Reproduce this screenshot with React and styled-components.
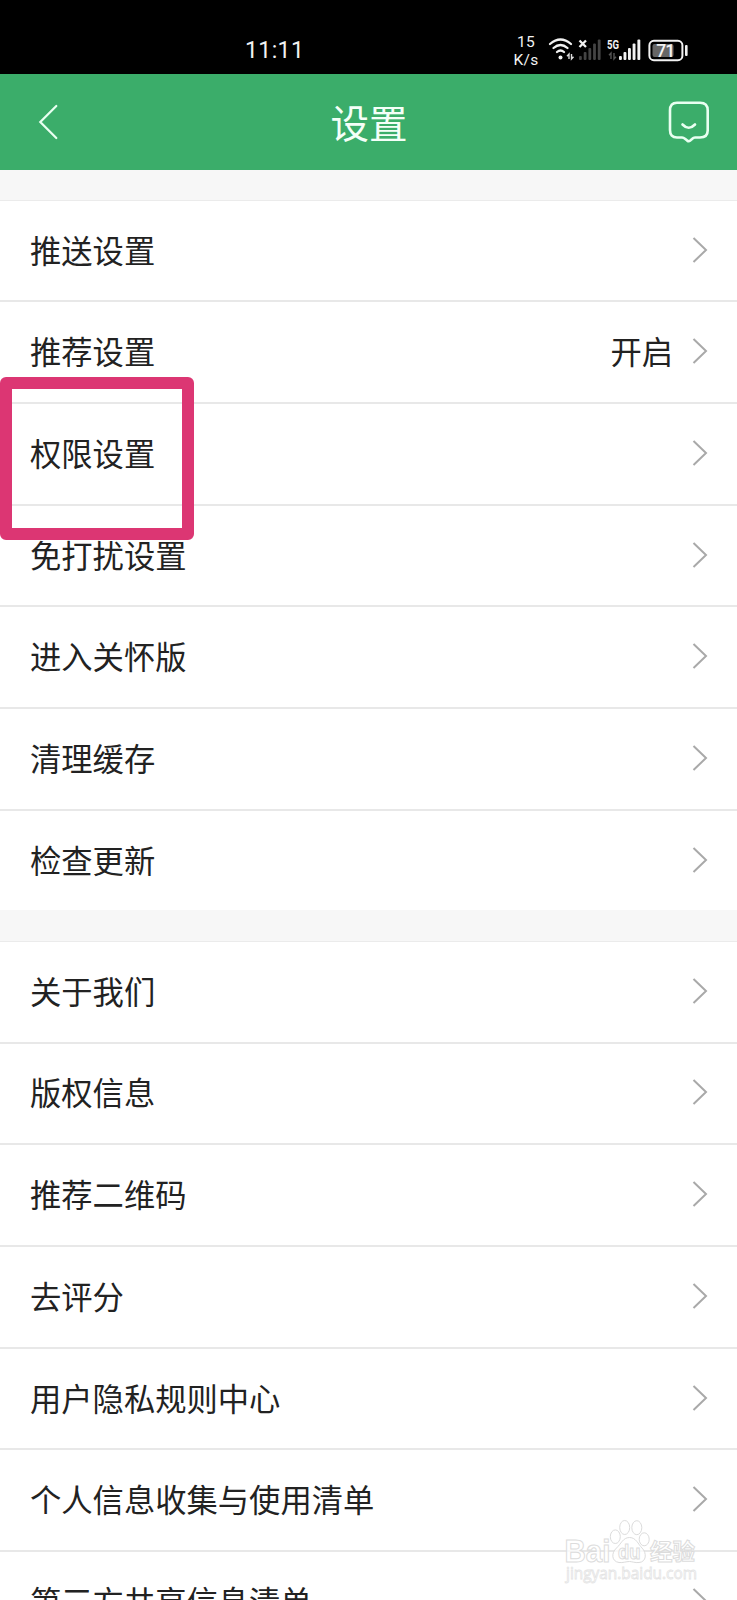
import React from 'react';
import styled, { createGlobalStyle } from 'styled-components';

const GlobalStyle = createGlobalStyle`
  html, body {
    margin: 0;
    padding: 0;
    overflow: hidden;
  }
  * {
    box-sizing: border-box;
  }
`;

const Screen = styled.div`
  position: relative;
  width: 737px;
  height: 1600px;
  overflow: hidden;
  background: #f7f7f7;
  color: #222;
  font-family: "Noto Sans CJK SC", sans-serif;
`;

const StatusBar = styled.div`
  display: flex;
  justify-content: space-between;
  height: 74px;
  padding: 30px 39px 0 245px;
  background: #000;
  color: #f2f2f2;
`;

const Clock = styled.div`
  height: 40px;
  line-height: 42px;
  font-family: Roboto, sans-serif;
  font-size: 23px;
  letter-spacing: 0.4px;
`;

const StatusIcons = styled.div`
  display: flex;
`;

const Speed = styled.div`
  width: 26px;
  margin: 3px 9px 0 0;
  font-family: Roboto, sans-serif;
  font-size: 15.5px;
  line-height: 18px;
  letter-spacing: 0.3px;
  text-align: center;
  white-space: nowrap;
`;

const Header = styled.div`
  display: flex;
  align-items: center;
  justify-content: space-between;
  height: 96px;
  padding: 0 26px 0 37px;
  background: #3bad6a;
`;

const Title = styled.h1`
  margin: 0 10px 0 0;
  color: #f4fff8;
  font-size: 38.5px;
  font-weight: 400;
  line-height: 94px;
  height: 96px;
`;

const Group = styled.div`
  margin-top: ${props => props.$gap || '30px'};
  border-top: 1px solid #ebebeb;
  background: #fff;
`;

const Row = styled.div`
  display: flex;
  align-items: center;
  height: 101.7px;
  padding: 0 29px 0 30px;
  border-bottom: 2px solid #e8e8e8;
  font-size: 31.3px;
  line-height: 46px;
  white-space: nowrap;

  &:first-child {
    height: 101.4px;
  }
  &:last-child {
    height: 99.4px;
    border-bottom: 0;
  }
`;

const Label = styled.span`
  flex: 1;
  padding-bottom: 2px;
`;

const Value = styled.span`
  margin-right: 19px;
  padding-bottom: 2px;
`;

const Marker = styled.div`
  position: absolute;
  left: 0;
  top: 377px;
  width: 194px;
  height: 163px;
  border: 12px solid #dc3673;
  border-radius: 6px;
`;

const Watermark = styled.svg`
  position: absolute;
  left: 560px;
  top: 1515px;
`;

const settings = [
  { name: '推送设置' },
  { name: '推荐设置', value: '开启' },
  { name: '权限设置' },
  { name: '免打扰设置' },
  { name: '进入关怀版' },
  { name: '清理缓存' },
  { name: '检查更新' }
];

const about = [
  { name: '关于我们' },
  { name: '版权信息' },
  { name: '推荐二维码' },
  { name: '去评分' },
  { name: '用户隐私规则中心' },
  { name: '个人信息收集与使用清单' },
  { name: '第三方共享信息清单' },
  { name: '' }
];

const Chevron = () => (
  <svg width="16" height="28" viewBox="0 0 16 28" fill="none" stroke="#a9a9a9" strokeWidth="2">
    <path d="M1.5 1 L14 13 L1.5 25" />
  </svg>
);

const Signals = () => (
  <svg width="150" height="34" viewBox="0 0 150 34" fill="none">
    {/* wifi */}
    <g stroke="#f2f2f2" strokeWidth="2.3" strokeLinecap="round">
      <path d="M2 14 Q12.5 5 23 14" />
      <path d="M5.5 18 Q12.5 12 19.5 18" />
      <path d="M9 22 Q12.5 19 16 22" />
    </g>
    <circle cx="12.5" cy="27.5" r="2" fill="#f2f2f2" />
    <path d="M21 29 V24 L19 26.3 M23.5 24 V29 L25.5 26.7" stroke="#ddd" strokeWidth="1.4" />
    {/* sim 1, no service */}
    <path d="M31.5 10.5 L38 17 M38 10.5 L31.5 17" stroke="#f2f2f2" strokeWidth="2.3" />
    <g fill="#444">
      <rect x="31" y="26" width="2.8" height="4" rx="1" />
      <rect x="35.7" y="22" width="2.8" height="8" rx="1" />
      <rect x="40.4" y="18" width="2.8" height="12" rx="1" />
      <rect x="45.1" y="13.5" width="2.8" height="16.5" rx="1" />
      <rect x="49.8" y="9.5" width="2.8" height="20.5" rx="1" />
    </g>
    {/* sim 2 */}
    <text x="59" y="18.8" fill="#f2f2f2" fontFamily="Roboto, sans-serif" fontSize="12.5" fontWeight="700" textLength="12" lengthAdjust="spacingAndGlyphs">5G</text>
    <path d="M63 29 V23 L61 25.3 M66 23 V29 L68 26.7" stroke="#555" strokeWidth="1.4" />
    <g fill="#f2f2f2">
      <rect x="71" y="26" width="2.9" height="4" rx="1" />
      <rect x="75.5" y="22" width="2.9" height="8" rx="1" />
      <rect x="80" y="18" width="2.9" height="12" rx="1" />
      <rect x="84.6" y="13.5" width="2.9" height="16.5" rx="1" />
      <rect x="89.4" y="9.5" width="2.9" height="20.5" rx="1" />
    </g>
    {/* battery */}
    <rect x="101.4" y="10.8" width="33" height="19.4" rx="4.5" stroke="#f2f2f2" strokeWidth="2" />
    <rect x="104.5" y="14" width="21" height="13" rx="2" fill="#666" />
    <rect x="137" y="15" width="2.6" height="11" rx="1" fill="#f2f2f2" />
    <text x="117.3" y="26.6" fill="#f2f2f2" fontFamily="Roboto, sans-serif" fontSize="17.5" fontWeight="500" textAnchor="middle" letterSpacing="-1">71</text>
  </svg>
);

const List = ({ items, gap }) => (
  <Group $gap={gap}>
    {items.map((item, i) => (
      <Row key={i}>
        <Label>{item.name}</Label>
        {item.value && <Value>{item.value}</Value>}
        <Chevron />
      </Row>
    ))}
  </Group>
);

const App = () => (
  <Screen>
    <GlobalStyle />
    <StatusBar>
      <Clock>11:11</Clock>
      <StatusIcons>
        <Speed>15<br />K/s</Speed>
        <Signals />
      </StatusIcons>
    </StatusBar>
    <Header>
      <svg width="44" height="40" viewBox="0 0 44 40" fill="none" stroke="#e9fff1" strokeWidth="2.2" strokeLinecap="round">
        <path d="M19.3 4 L3.3 20 L19.3 36" />
      </svg>
      <Title>设置</Title>
      <svg width="44" height="44" viewBox="0 0 44 44" fill="none" stroke="#e9fff1" strokeWidth="2.6" strokeLinecap="round" strokeLinejoin="round">
        <path d="M10 2.8 H33 Q40.7 2.8 40.7 10.5 V30.5 Q40.7 37.5 33 37.5 H28 Q26.5 37.5 25 39 L23.2 40.6 Q21.8 41.8 20.2 40.6 L18.3 39 Q16.5 37.5 15 37.5 H10 Q3 37.5 3 30 V10.5 Q3 2.8 10 2.8 Z" />
        <path d="M15.5 24.5 Q21.7 31 28 24.5" />
      </svg>
    </Header>
    <List items={settings} />
    <List items={about} gap="31px" />
    <Marker />
    <Watermark width="150" height="75" viewBox="0 0 150 75">
      <g fill="#fff" fillOpacity="0.75" stroke="#dcdcdc" strokeWidth="1">
        <text x="4.5" y="46.5" fontFamily="Liberation Sans, sans-serif" fontSize="31" fontWeight="700" textLength="46" lengthAdjust="spacingAndGlyphs">Bai</text>
        <ellipse cx="55.3" cy="21.7" rx="5" ry="6.8" />
        <ellipse cx="64.7" cy="12.5" rx="5" ry="7" />
        <ellipse cx="76.8" cy="12.7" rx="5" ry="7" />
        <ellipse cx="84.2" cy="24.3" rx="5" ry="6.5" />
        <path d="M69.5 22.5 C76 22.5 78 29 82 33 C87 38 86.5 47 79 47.5 C75 48 72 46.5 69.5 46.5 C66 46.5 63 48 59 47.5 C51.5 46.5 51 38 56.5 33 C61 29 63 22.5 69.5 22.5 Z" />
        <text x="58" y="43.5" fontFamily="Liberation Sans, sans-serif" fontSize="20" fontWeight="700" textLength="22.5" lengthAdjust="spacingAndGlyphs">du</text>
        <text x="90" y="45" fontFamily="Noto Sans CJK SC, sans-serif" fontSize="22.5" fontWeight="700" textLength="45">经验</text>
        <text x="6" y="64" fontFamily="Open Sans, sans-serif" fontSize="16" textLength="131" lengthAdjust="spacingAndGlyphs" stroke="#e4e4e4" strokeWidth="0.8">jingyan.baidu.com</text>
      </g>
    </Watermark>
  </Screen>
);

export default App;
